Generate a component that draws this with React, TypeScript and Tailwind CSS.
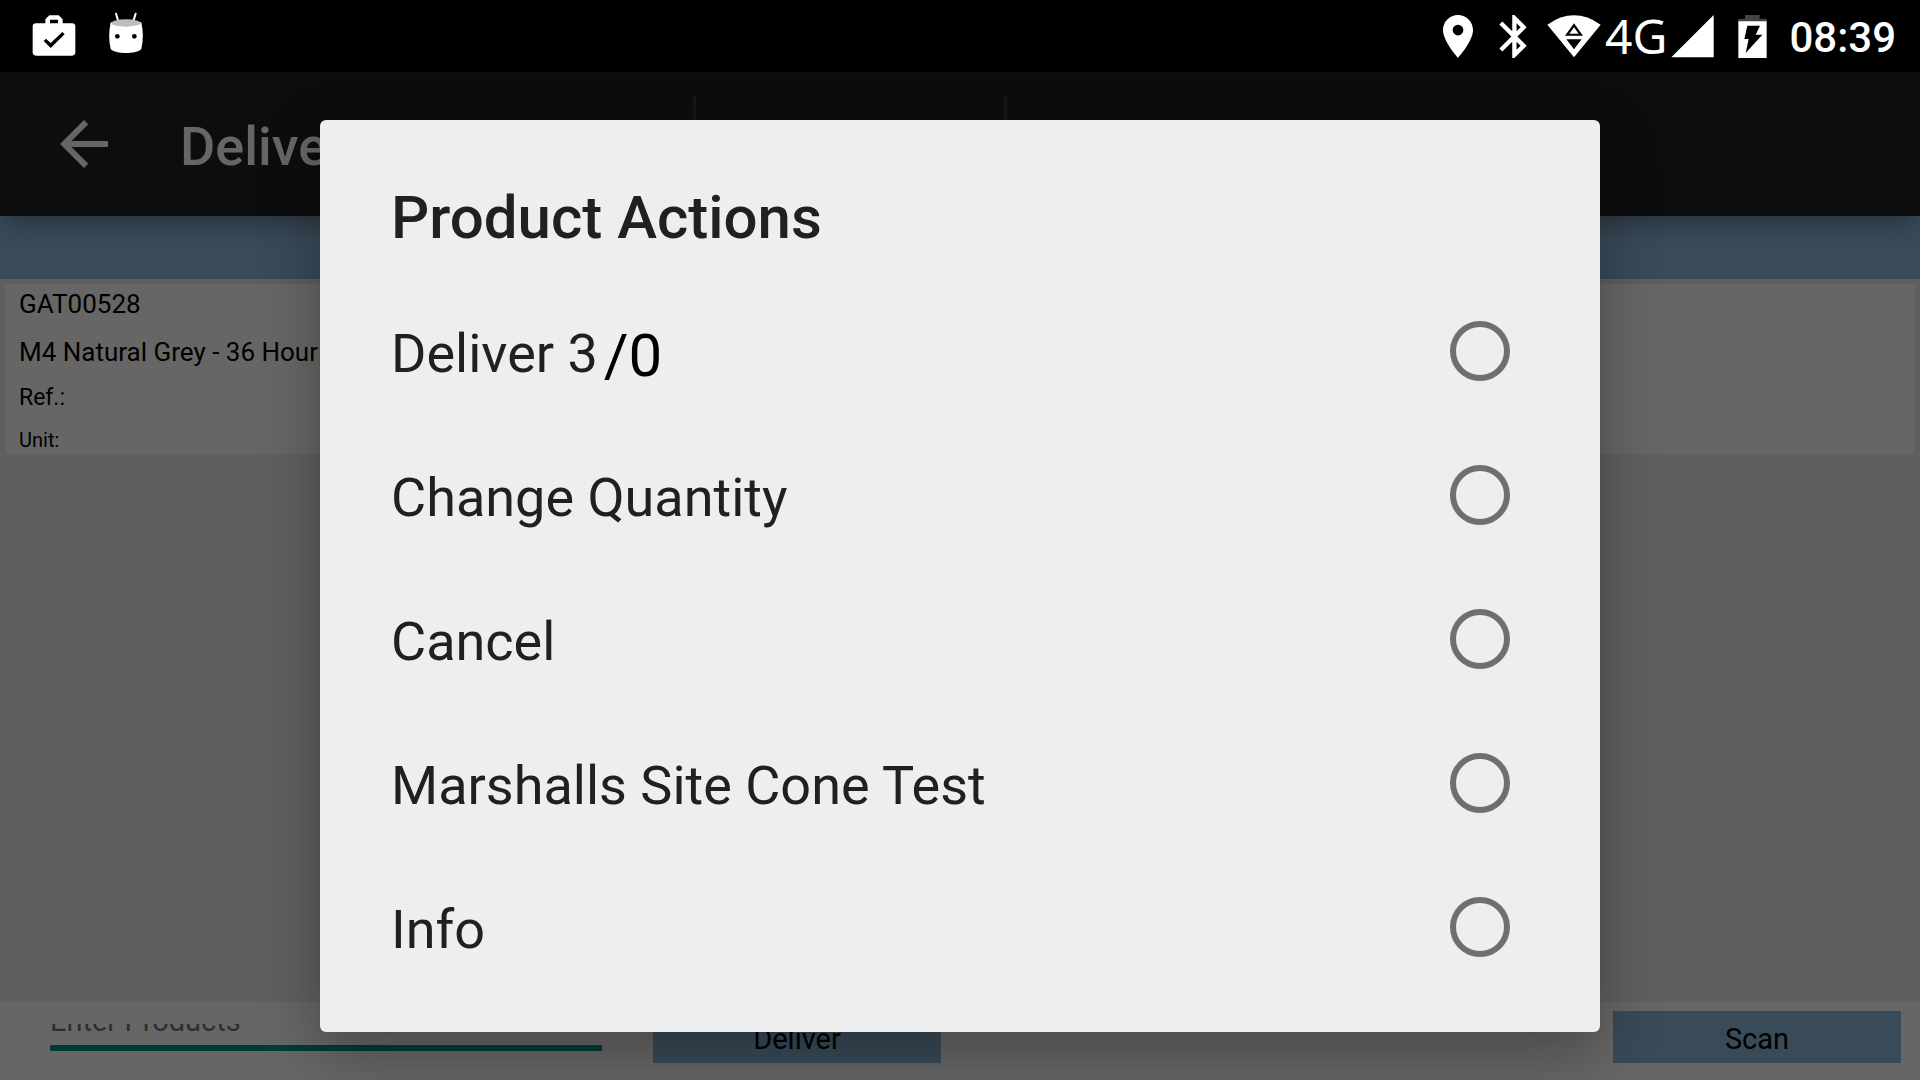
import React from 'react';

const actions = ['Deliver 3', 'Change Quantity', 'Cancel', 'Marshalls Site Cone Test', 'Info'];

const StatusBar = () => (
  <div className="flex h-18 shrink-0 items-center justify-between bg-black pl-8 pr-6 text-white">
    <div className="flex items-center gap-[31px]">
      <svg className="h-[42px] w-11" viewBox="96 43 132 126" fill="none">
        <rect x="98" y="68" width="128" height="97" rx="10" fill="#fff" />
        <path d="M136 72V56l12-12h28l12 12v16h-14V57h-24v15z" fill="#fff" />
        <path d="M131 121l7-7 14 13 35-33 7 7-42 41z" fill="#000" />
      </svg>
      <svg className="h-[42px] w-[38px]" viewBox="321 44 114 126" overflow="visible">
        <path d="M348 40l8 26M407 40l-8 26" stroke="#fff" strokeWidth="6" strokeLinecap="round" />
        <path d="M332 66h92c6 28 6 54 0 80-14 16-78 16-92 0-6-26-6-52 0-80z" fill="#fff" />
        <ellipse cx="378" cy="68" rx="44" ry="11" fill="#bdbdbd" />
        <circle cx="352" cy="108" r="7" fill="#000" />
        <circle cx="403" cy="108" r="7" fill="#000" />
      </svg>
    </div>

    <div className="flex items-center">
      <svg className="h-[43px] w-[30px]" viewBox="5 2 14 20" fill="currentColor">
        <path d="M12 2C8.13 2 5 5.13 5 9c0 5.25 7 13 7 13s7-7.75 7-13c0-3.87-3.13-7-7-7zm0 9.5a2.5 2.5 0 1 1 0-5 2.5 2.5 0 0 1 0 5z" />
      </svg>
      <svg className="ml-[26px] h-[43px] w-7" viewBox="5 2 12.71 20" fill="currentColor">
        <path d="M17.71 7.71L12 2h-1v7.59L6.41 5 5 6.41 10.59 12 5 17.59 6.41 19 11 14.41V22h1l5.71-5.71-4.3-4.29 4.3-4.29zM13 5.83l1.88 1.88L13 9.59V5.83zm1.88 10.46L13 18.17v-3.76l1.88 1.88z" />
      </svg>
      <svg className="ml-5 h-[43px] w-[54px]" viewBox="383 42 162 129">
        <path d="M384 71q80-56 160 0l-80 98z" fill="#fff" />
        <path d="M464 67l27 37h-54zM441 115h46l-23 30z" fill="#000" />
        <path d="M464 79l14 19h-28z" fill="#fff" />
      </svg>
      <span className="ml-1 font-['Noto_Sans',sans-serif] text-[48px] leading-none">4G</span>
      <svg className="ml-1 h-[43px] w-[43px]" viewBox="754 40 129 129" fill="currentColor">
        <path d="M882 40v127H755z" />
      </svg>
      <svg className="ml-6 h-[43px] w-[29px]" viewBox="957 44 87 129">
        <path d="M978 44h44v11h21v10h-85V55h20z" fill="#444" />
        <path d="M958 63h85v110h-85z" fill="#fff" />
        <path d="M985 76h38l-13 27h20l-50 55 9-42h-13z" fill="#000" />
      </svg>
      <span className="ml-[22px] pt-1 text-[42px] font-medium leading-none">08:39</span>
    </div>
  </div>
);

const AppBar = () => (
  <header className="relative flex h-36 shrink-0 items-center bg-[#212121] text-white shadow-[0_10px_24px_-4px_rgba(0,0,0,0.35)]">
    <div className="flex w-[693px] items-center pl-15">
      <button aria-label="Back">
        <svg className="h-12 w-12" viewBox="4 4 16 16" fill="currentColor">
          <path d="M20 11H7.83l5.59-5.59L12 4l-8 8 8 8 1.41-1.41L7.83 13H20v-2z" />
        </svg>
      </button>
      <h1 className="ml-18 pt-1.5 text-[54px] font-medium leading-none">Deliver</h1>
    </div>
    <div className="h-24 w-[311px] border-l-3 border-white/10" />
    <div className="h-24 flex-1 border-l-3 border-white/10" />
  </header>
);

const ProductCard = () => (
  <div className="m-[5px] flex flex-col gap-4 bg-white px-3.5 pb-0.5 pt-1 text-black">
    <p className="text-[26px] leading-8">GAT00528</p>
    <p className="text-[26px] leading-8">M4 Natural Grey - 36 Hour</p>
    <p className="text-[23px] leading-7">Ref.:</p>
    <p className="text-[20px] leading-6">Unit:</p>
  </div>
);

const BottomBar = () => (
  <footer className="flex h-[78px] shrink-0 items-start bg-white pl-[50px] pr-[19px] pt-[9px] text-black">
    <div className="mt-[13px] flex h-[27px] w-[552px] items-end overflow-hidden border-b-6 border-[#009688]">
      <input
        aria-label="Enter Products"
        placeholder="Enter Products"
        className="h-12 w-full shrink-0 bg-transparent text-[29px] outline-none placeholder:text-[#757575]"
      />
    </div>
    <button className="ml-[51px] h-[52px] w-72 bg-[#8fb9dc] pt-1 text-[29px] leading-none">Deliver</button>
    <button className="ml-auto h-[52px] w-72 bg-[#8fb9dc] pt-1 text-[29px] leading-none">Scan</button>
  </footer>
);

const ProductActionsDialog = () => (
  <div
    role="dialog"
    aria-labelledby="dialog-title"
    className="w-2/3 rounded-md bg-[#eeeeee] pb-[33px] pl-[71px] pr-[90px] text-[#202020] shadow-[0_20px_60px_rgba(0,0,0,0.3)]"
  >
    <h2 id="dialog-title" className="h-[159px] pt-14 text-[60px] font-medium leading-[84px]">
      Product Actions
    </h2>
    {actions.map((action, index) => (
      <label key={action} className="flex h-36 items-center justify-between">
        <span className="flex items-center pt-1.5 text-[54px] leading-none">
          {action}
          {index === 0 && <span className="ml-1.5 pt-1 text-[60px] leading-none text-black">/0</span>}
        </span>
        <input
          type="radio"
          name="action"
          value={action}
          className="h-15 w-15 appearance-none rounded-full border-6 border-[#6f6f6f] checked:bg-[#009688]"
        />
      </label>
    ))}
  </div>
);

const App = () => {
  return (
    <div className="flex min-h-screen flex-col bg-black font-[Roboto,sans-serif]">
      <StatusBar />
      <div className="relative flex flex-1 flex-col bg-[#eeeeee]">
        <AppBar />
        <div className="h-[63px] shrink-0 bg-[#8fb9dc]" />
        <main className="flex-1">
          <ProductCard />
        </main>
        <BottomBar />

        {/* scrim + dialog */}
        <div className="absolute inset-0 flex items-center justify-center bg-black/60">
          <ProductActionsDialog />
        </div>
      </div>
    </div>
  );
};

export default App;
